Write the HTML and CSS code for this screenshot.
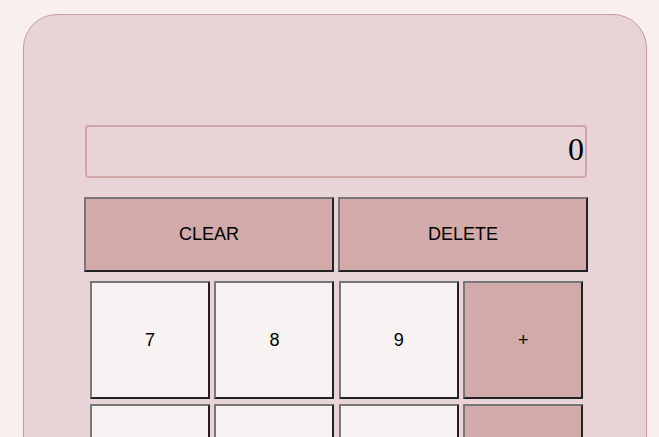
FILE: index.html
```html
<!DOCTYPE html>
<html>
<head>
<meta charset="utf-8">
<link rel="stylesheet" href="styles.css">
</head>
<body>
<div class="calc">
  <div class="inner">
    <div class="display">0</div>
    <div class="actions">
      <button class="btn op">CLEAR</button>
      <button class="btn op">DELETE</button>
    </div>
    <div class="keys">
      <button class="btn num">7</button>
      <button class="btn num">8</button>
      <button class="btn num">9</button>
      <button class="btn op">+</button>
      <button class="btn num">4</button>
      <button class="btn num">5</button>
      <button class="btn num">6</button>
      <button class="btn op">-</button>
      <button class="btn num">1</button>
      <button class="btn num">2</button>
      <button class="btn num">3</button>
      <button class="btn op">*</button>
      <button class="btn num">0</button>
      <button class="btn num">.</button>
      <button class="btn op">=</button>
      <button class="btn op">/</button>
    </div>
  </div>
</div>
</body>
</html>
```
FILE: styles.css
```css
html, body {
  margin: 0;
  padding: 0;
  background: #f9efef;
}
body {
  font-family: "Liberation Sans", Arial, sans-serif;
}
.calc {
  margin: 14px 12px 0 23px;
  border: 1px solid #c99a9c;
  border-radius: 34px;
  background: #e8d4d6;
  padding: 110px 0 40px 60px;
}
.inner {
  width: 504px;
  display: flex;
  flex-direction: column;
}
.display {
  box-sizing: border-box;
  margin-left: 1px;
  width: 502px;
  height: 53px;
  border: 2px solid #d0a6a7;
  border-radius: 4px;
  padding: 0 1px 4px 1px;
  display: flex;
  align-items: center;
  justify-content: flex-end;
  font-family: "Liberation Serif", "Times New Roman", serif;
  font-size: 32px;
  color: #000;
}
.actions {
  margin-top: 19px;
  display: grid;
  grid-template-columns: 250px 250px;
  column-gap: 4px;
}
.actions .btn {
  height: 75px;
}
.keys {
  margin: 9px 0 0 6px;
  display: grid;
  grid-template-columns: repeat(4, 120px);
  column-gap: 4.4px;
  row-gap: 5px;
}
.keys .btn {
  height: 118px;
}
.btn {
  box-sizing: border-box;
  margin: 0;
  padding: 0;
  border-width: 2px;
  border-style: solid;
  border-color: #777 #222 #222 #777;
  font-family: "Liberation Sans", Arial, sans-serif;
  font-size: 18px;
  color: #000;
}
.op {
  background: #d3aaaa;
}
.num {
  background: #f7f3f3;
}
```
